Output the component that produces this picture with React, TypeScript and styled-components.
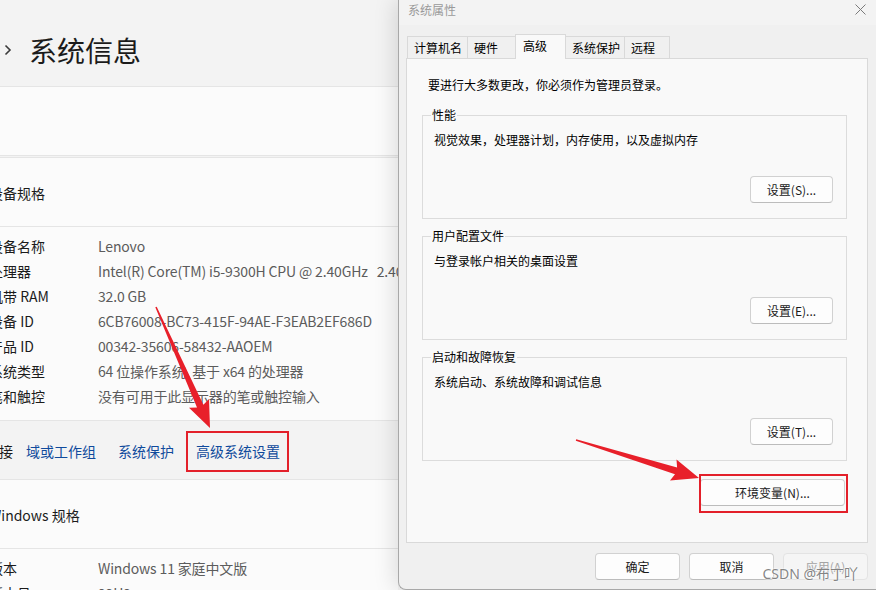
import React from 'react'
import styled, { createGlobalStyle } from 'styled-components'

const GlobalStyle = createGlobalStyle`
  html, body {
    margin: 0;
    padding: 0;
  }
  body {
    width: 876px;
    height: 590px;
    overflow: hidden;
    background: #f3f3f3;
    font-family: "Noto Sans CJK SC", "Noto Sans", sans-serif;
  }
  * {
    box-sizing: border-box;
  }
`

type Spec = { label: string; value: string }

const deviceSpecs: Spec[] = [
  { label: '设备名称', value: 'Lenovo' },
  { label: '处理器', value: 'Intel(R) Core(TM) i5-9300H CPU @ 2.40GHz   2.40 GHz' },
  { label: '机带 RAM', value: '32.0 GB' },
  { label: '设备 ID', value: '6CB76008-BC73-415F-94AE-F3EAB2EF686D' },
  { label: '产品 ID', value: '00342-35606-58432-AAOEM' },
  { label: '系统类型', value: '64 位操作系统, 基于 x64 的处理器' },
  { label: '笔和触控', value: '没有可用于此显示器的笔或触控输入' },
]

const windowsSpecs: Spec[] = [
  { label: '版本', value: 'Windows 11 家庭中文版' },
  { label: '版本号', value: '22H2' },
]

const tabs = [
  { name: '计算机名', width: 61 },
  { name: '硬件', width: 49 },
  { name: '高级', width: 51, active: true },
  { name: '系统保护', width: 60 },
  { name: '远程', width: 46 },
]

const groups = [
  { title: '性能', text: '视觉效果，处理器计划，内存使用，以及虚拟内存', button: '设置(S)...' },
  { title: '用户配置文件', text: '与登录帐户相关的桌面设置', button: '设置(E)...' },
  { title: '启动和故障恢复', text: '系统启动、系统故障和调试信息', button: '设置(T)...' },
]

// arrow polygon from tail to tip
const arrowPoints = (tx: number, ty: number, px: number, py: number) => {
  const len = Math.hypot(px - tx, py - ty)
  const ux = (px - tx) / len
  const uy = (py - ty) / len
  const nx = -uy
  const ny = ux
  const headLen = 24
  const bx = px - ux * headLen
  const by = py - uy * headLen
  const wx = bx - ux * 3
  const wy = by - uy * 3
  const pts = [
    [tx + nx * 0.8, ty + ny * 0.8],
    [bx + nx * 3.5, by + ny * 3.5],
    [wx + nx * 11, wy + ny * 11],
    [px, py],
    [wx - nx * 11, wy - ny * 11],
    [bx - nx * 3.5, by - ny * 3.5],
    [tx - nx * 0.8, ty - ny * 0.8],
  ]
  return pts.map((p) => `${p[0].toFixed(1)},${p[1].toFixed(1)}`).join(' ')
}

const App: React.FC = () => {
  const renderRows = (list: Spec[]) =>
    list.map((row) => (
      <SpecRow key={row.label}>
        <span>{row.label}</span>
        <SpecValue>{row.value}</SpecValue>
      </SpecRow>
    ))

  return (
    <Screen>
      <GlobalStyle />
      <SettingsWindow>
        <PageHeader>
          <svg width='8' height='12' viewBox='0 0 8 12'>
            <polyline points='1.5,1.5 6,6 1.5,10.5' fill='none' stroke='#3a3a3a' strokeWidth='1.6' />
          </svg>
          <PageTitle>系统信息</PageTitle>
        </PageHeader>

        <Card $height={70} />

        <Card $gap>
          <CardHeading>设备规格</CardHeading>
          <SpecList>{renderRows(deviceSpecs)}</SpecList>
        </Card>

        <LinksBar>
          <span>相关链接</span>
          <LinkGroup>
            <RelatedLink>域或工作组</RelatedLink>
            <RelatedLink>系统保护</RelatedLink>
            <RelatedLink $marked>高级系统设置</RelatedLink>
          </LinkGroup>
        </LinksBar>

        <Card $gap>
          <CardHeading>Windows 规格</CardHeading>
          <SpecList>{renderRows(windowsSpecs)}</SpecList>
        </Card>
      </SettingsWindow>

      <Dialog>
        <TitleBar>
          <DialogTitle>系统属性</DialogTitle>
          <svg width='11' height='11' viewBox='0 0 11 11'>
            <path d='M0.5 0.5 L10.5 10.5 M10.5 0.5 L0.5 10.5' stroke='#7a7a7a' strokeWidth='1' />
          </svg>
        </TitleBar>

        <DialogBody>
          <TabRow>
            {tabs.map((t) => (
              <Tab key={t.name} $w={t.width} $active={!!t.active}>
                {t.name}
              </Tab>
            ))}
          </TabRow>

          <TabPanel>
            <Intro>要进行大多数更改，你必须作为管理员登录。</Intro>
            {groups.map((g) => (
              <Group key={g.title}>
                <legend>{g.title}</legend>
                <GroupText>{g.text}</GroupText>
                <Button $w={83}>{g.button}</Button>
              </Group>
            ))}
            <EnvButton $w={145}>环境变量(N)...</EnvButton>
          </TabPanel>

          <ActionRow>
            <Button $w={85}>确定</Button>
            <Button $w={85}>取消</Button>
            <Button $w={85} disabled>
              应用(A)
            </Button>
          </ActionRow>
        </DialogBody>
        <Watermark>CSDN @布丁吖</Watermark>
      </Dialog>

      <Annotations width='876' height='590' viewBox='0 0 876 590'>
        <polygon points={arrowPoints(156, 307, 210, 428)} fill='#e8202a' />
        <polygon points={arrowPoints(576, 440, 699, 478)} fill='#e8202a' />
      </Annotations>
    </Screen>
  )
}

export default App

const Screen = styled.div`
  position: relative;
  display: flex;
  width: 876px;
  height: 590px;
  overflow: hidden;
`

/* left: settings > about page */

const SettingsWindow = styled.div`
  flex: none;
  width: 441px;
  height: 590px;
  margin-left: -43px;
  overflow: hidden;
  background: #f3f3f3;
  color: #1b1b1b;
  font-size: 14px;
`

const PageHeader = styled.header`
  display: flex;
  align-items: center;
  gap: 17px;
  height: 86px;
  padding: 14px 0 0 47px;
`

const PageTitle = styled.h1`
  margin: 0;
  font-size: 28px;
  font-weight: 400;
  line-height: 34px;
  color: #1b1b1b;
`

const Card = styled.section<{ $height?: number; $gap?: boolean }>`
  background: #fbfbfb;
  border-top: 1px solid #e5e5e5;
  border-bottom: 1px solid #e5e5e5;
  margin-top: ${(p) => (p.$gap ? '1px' : '0')};
  ${(p) => (p.$height ? `height: ${p.$height}px;` : '')}
`

const CardHeading = styled.div`
  display: flex;
  align-items: center;
  height: 69px;
  padding: 2px 0 0 32px;
  border-bottom: 1px solid #e5e5e5;
  white-space: nowrap;
`

const SpecList = styled.div`
  padding: 7px 0 11px 32px;
`

const SpecRow = styled.div`
  display: grid;
  grid-template-columns: 109px 1fr;
  height: 25px;
  line-height: 25px;
  white-space: pre;
  color: #1b1b1b;
`

const SpecValue = styled.span`
  color: #5c5c5c;
  letter-spacing: -0.15px;
`

const LinksBar = styled.div`
  display: flex;
  align-items: center;
  gap: 13px;
  height: 57px;
  padding-top: 2px;
  white-space: nowrap;
`

const LinkGroup = styled.div`
  display: flex;
  gap: 22px;
`

const RelatedLink = styled.span<{ $marked?: boolean }>`
  position: relative;
  color: #0f4a9c;
  line-height: 20px;

  ${(p) =>
    p.$marked &&
    `
    &::after {
      content: '';
      position: absolute;
      left: -10px;
      right: -9px;
      top: -10px;
      bottom: -11px;
      border: 2.5px solid #e3202a;
    }
  `}
`

/* right: system properties dialog */

const Dialog = styled.div`
  position: relative;
  flex: none;
  display: flex;
  flex-direction: column;
  width: 478px;
  height: 590px;
  background: #f0f0f0;
  border-left: 1px solid #a8a8a8;
  border-bottom: 1px solid #a8a8a8;
  border-bottom-left-radius: 8px;
  box-shadow: -3px 0 22px rgba(0, 0, 0, 0.13);
  color: #000;
  font-size: 12px;
`

const TitleBar = styled.div`
  display: flex;
  justify-content: space-between;
  align-items: flex-start;
  height: 25px;
  padding: 3px 10px 0 9px;
  background: #f3f3f3;

  svg {
    margin-top: 1px;
  }
`

const DialogTitle = styled.span`
  color: #9a9a9a;
  line-height: 14px;
`

const DialogBody = styled.div`
  padding: 9px 0 0 0;
`

const TabRow = styled.div`
  display: flex;
  align-items: flex-end;
  height: 24px;
  margin-left: 8px;
`

const Tab = styled.div<{ $w: number; $active: boolean }>`
  position: relative;
  z-index: ${(p) => (p.$active ? 2 : 1)};
  display: flex;
  align-items: center;
  width: ${(p) => p.$w}px;
  height: ${(p) => (p.$active ? 25 : 22)}px;
  margin-bottom: ${(p) => (p.$active ? '-1px' : '0')};
  padding: ${(p) => (p.$active ? '0 0 3px 7px' : '0 0 0 6px')};
  border: 1px solid #d9d9d9;
  border-bottom: none;
  background: ${(p) => (p.$active ? '#f9f9f9' : '#f0f0f0')};
  line-height: 14px;
  white-space: nowrap;

  & + & {
    margin-left: -1px;
  }
`

const TabPanel = styled.div`
  display: flex;
  flex-direction: column;
  width: 462px;
  height: 485px;
  margin-left: 7px;
  padding: 18px 20px 0 15px;
  background: #f9f9f9;
  border: 1px solid #d9d9d9;
`

const Intro = styled.div`
  margin: 0 0 14px 6px;
  line-height: 16px;
`

const Group = styled.fieldset`
  display: flex;
  flex-direction: column;
  min-width: 0;
  margin: 0 0 9px 0;
  padding: 0 13px 15px 11px;
  border: 1px solid #dcdcdc;

  legend {
    margin-left: -3px;
    padding: 0 1px;
    line-height: 16px;
  }
`

const GroupText = styled.div`
  margin-top: 9px;
  line-height: 16px;
`

const Button = styled.button<{ $w: number }>`
  width: ${(p) => p.$w}px;
  height: 27px;
  padding: 0;
  border: 1px solid #d1d1d1;
  border-bottom-color: #bcbcbc;
  border-radius: 4px;
  background: #fdfdfd;
  color: #1a1a1a;
  font-family: inherit;
  font-size: 12px;
  line-height: 14px;

  ${Group} & {
    align-self: flex-end;
    margin-top: 28px;
  }

  &:disabled {
    background: #f5f5f5;
    border-color: #e3e3e3;
    color: #a4a4a4;
  }
`

const EnvButton = styled(Button)`
  position: relative;
  align-self: flex-end;
  margin: 9px 2px 0 0;

  &::after {
    content: '';
    position: absolute;
    left: -2px;
    right: -4px;
    top: -6px;
    bottom: -8px;
    border: 2px solid #e3202a;
  }
`

const ActionRow = styled.div`
  display: flex;
  justify-content: flex-end;
  gap: 9px;
  margin-top: 10px;
  padding-right: 8px;
`

const Watermark = styled.div`
  position: absolute;
  right: 18px;
  bottom: 6px;
  color: rgba(110, 110, 110, 0.85);
  font-family: "Noto Sans", "Noto Sans CJK SC", sans-serif;
  font-size: 14px;
  line-height: 18px;
  text-shadow: 0 0 2px #fff, 0 0 2px #fff;
  pointer-events: none;
`

const Annotations = styled.svg`
  position: absolute;
  left: 0;
  top: 0;
  pointer-events: none;
`
